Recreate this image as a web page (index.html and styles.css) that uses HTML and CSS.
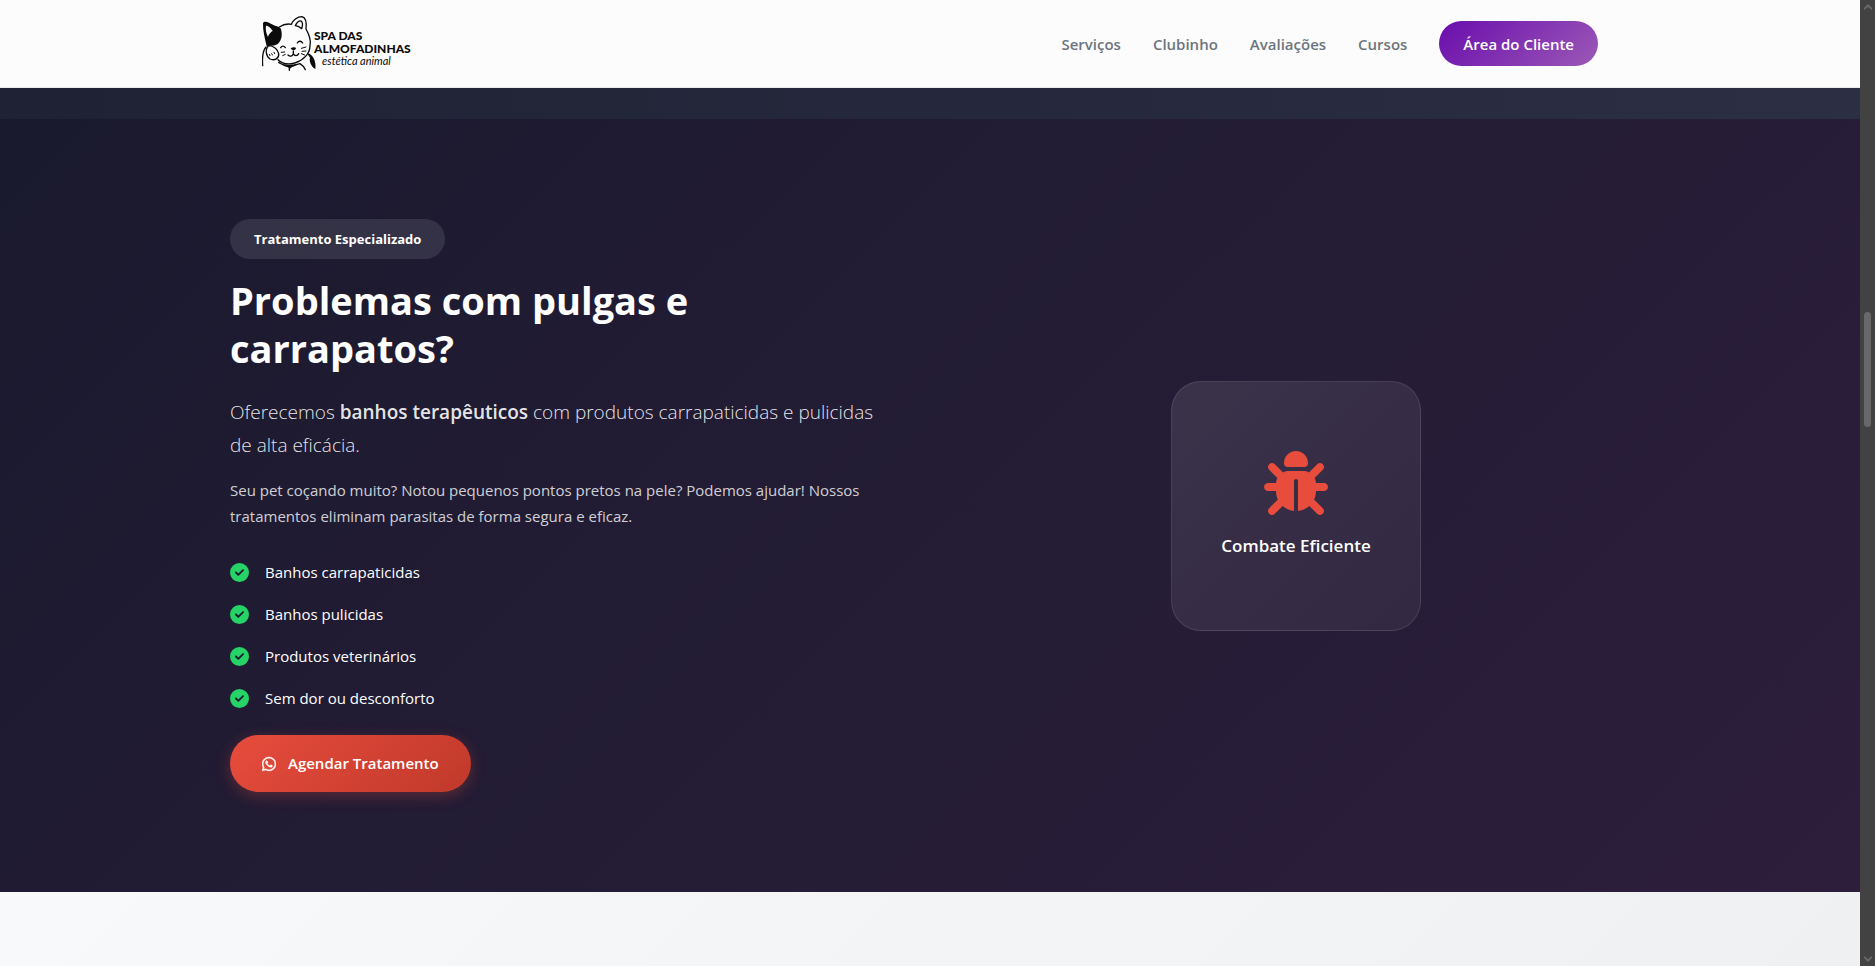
FILE: index.html
```html
<!DOCTYPE html>
<html lang="pt-BR">
<head>
  <meta charset="UTF-8" />
  <meta name="viewport" content="width=device-width, initial-scale=1.0"/>
  <title>Spa das Almofadinhas</title>
  <link rel="stylesheet" href="styles.css">
</head>
<body>
  <div class="page">
    <header class="header">
      <div class="container nav">
        <a class="logo" href="#">
          <svg class="logo-cat" viewBox="36 30 171 171" aria-hidden="true">
            <g fill="none" stroke="#0b0b0b" stroke-width="4" stroke-linecap="round" stroke-linejoin="round">
              <path d="M88 66C100 58 114 56 124 58C128 46 142 35 156 35C168 38 170 54 168 72C178 90 184 106 180 122C180 146 160 166 134 174C112 180 94 174 84 164"/>
              <path d="M136 62C140 54 147 47 153 48C159 52 158 62 155 71C150 66 144 63 136 62Z"/>
              <path d="M38 182C36 158 38 138 48 126"/>
              <path d="M56 122C44 132 48 154 60 162C74 168 88 160 86 146C84 134 72 122 56 122Z"/>
              <path d="M58 148L60 152M65 146L67 150M72 142L74 146" stroke-width="3"/>
              <path d="M92 128C96 122 102 122 106 128M142 114C146 106 154 108 158 114"/>
              <path d="M130 138V146C128 154 120 156 114 150M130 146C134 154 142 154 146 146"/>
              <path d="M94 142L104 141M98 152L106 148M154 130L168 126M156 139L168 138M154 146L164 150" stroke-width="3"/>
              <path d="M86 172C96 178 102 184 118 186C126 184 136 180 150 176C160 182 162 186 166 194M118 186V196"/>
            </g>
            <path fill="#0b0b0b" d="M39 54C44 46 56 52 66 58C76 64 86 64 92 70C98 88 96 106 84 116C74 124 64 120 50 124C44 98 38 74 39 54Z"/>
            <path fill="#fbfbfb" d="M48 62C56 62 64 70 68 78C62 82 56 88 54 96C48 84 46 72 48 62Z"/>
            <path fill="#0b0b0b" d="M122 130C128 126 136 126 138 130C136 138 126 138 122 130ZM172 146C184 144 200 166 196 192C186 188 176 168 180 158ZM96 176C110 180 126 180 140 176C132 186 126 182 120 192C116 184 106 184 96 176Z"/>
          </svg>
          <span class="logo-text">
            <span class="logo-name">SPA DAS</span>
            <span class="logo-name">ALMOFADINHAS</span>
            <span class="logo-tag">estética animal</span>
          </span>
        </a>
        <nav class="menu">
          <a href="#">Serviços</a>
          <a href="#">Clubinho</a>
          <a href="#">Avaliações</a>
          <a href="#">Cursos</a>
          <a class="btn-client" href="#">Área do Cliente</a>
        </nav>
      </div>
    </header>

    <div class="previous"></div>

    <section class="treatment">
      <div class="container treatment-grid">
        <div class="content">
          <span class="badge">Tratamento Especializado</span>
          <h2>Problemas com pulgas e carrapatos?</h2>
          <p class="lead">Oferecemos <strong>banhos terapêuticos</strong> com produtos carrapaticidas e pulicidas de alta eficácia.</p>
          <p class="text">Seu pet coçando muito? Notou pequenos pontos pretos na pele? Podemos ajudar! Nossos tratamentos eliminam parasitas de forma segura e eficaz.</p>
          <ul class="features">
            <li><svg viewBox="0 0 512 512" aria-hidden="true"><use href="#check"/></svg>Banhos carrapaticidas</li>
            <li><svg viewBox="0 0 512 512" aria-hidden="true"><use href="#check"/></svg>Banhos pulicidas</li>
            <li><svg viewBox="0 0 512 512" aria-hidden="true"><use href="#check"/></svg>Produtos veterinários</li>
            <li><svg viewBox="0 0 512 512" aria-hidden="true"><use href="#check"/></svg>Sem dor ou desconforto</li>
          </ul>
          <a class="btn-book" href="#">
            <svg viewBox="0 0 448 512" aria-hidden="true"><path fill="currentColor" stroke="currentColor" stroke-width="12" d="M380.9 97.1C339 55.1 283.2 32 223.9 32c-122.4 0-222 99.6-222 222 0 39.1 10.2 77.3 29.6 111L0 480l117.7-30.9c32.4 17.7 68.9 27 106.1 27h.1c122.3 0 224.1-99.6 224.1-222 0-59.3-25.2-115-67.1-157zm-157 341.6c-33.2 0-65.7-8.9-94-25.7l-6.7-4-69.8 18.3L72 359.2l-4.4-7c-18.5-29.4-28.2-63.3-28.2-98.2 0-101.7 82.8-184.5 184.6-184.5 49.3 0 95.6 19.2 130.4 54.1 34.8 34.9 56.2 81.2 56.1 130.5 0 101.8-84.9 184.6-186.6 184.6zm101.2-138.2c-5.5-2.8-32.8-16.2-37.9-18-5.1-1.9-8.8-2.8-12.5 2.8-3.7 5.6-14.3 18-17.6 21.8-3.2 3.7-6.5 4.2-12 1.4-32.6-16.3-54-29.1-75.5-66-5.7-9.8 5.7-9.1 16.3-30.3 1.8-3.7.9-6.9-.5-9.7-1.4-2.8-12.5-30.1-17.1-41.2-4.5-10.8-9.1-9.3-12.5-9.5-3.2-.2-6.9-.2-10.6-.2-3.7 0-9.7 1.4-14.8 6.9-5.1 5.6-19.4 19-19.4 46.3 0 27.3 19.9 53.7 22.6 57.4 2.8 3.7 39.1 59.7 94.8 83.8 35.2 15.2 49 16.5 66.6 13.9 10.7-1.6 32.8-13.4 37.4-26.4 4.6-13 4.6-24.1 3.2-26.4-1.3-2.5-5-3.9-10.5-6.6z"/></svg>
            Agendar Tratamento
          </a>
        </div>
        <div class="visual">
          <div class="card">
            <svg viewBox="0 0 512 512" aria-hidden="true"><path fill="currentColor" d="M256 0c53 0 96 43 96 96v3.600c0 15.700-12.700 28.400-28.400 28.400H188.400c-15.700 0-28.400-12.700-28.400-28.400V96c0-53 43-96 96-96zM41.400 105.400c12.500-12.500 32.800-12.500 45.300 0l64 64c.7.7 1.300 1.400 1.900 2.100c14.200-7.300 30.400-11.400 47.500-11.400H312c17.100 0 33.200 4.100 47.500 11.400c.6-.7 1.200-1.400 1.900-2.100l64-64c12.500-12.500 32.800-12.500 45.300 0s12.500 32.800 0 45.300l-64 64c-.7.7-1.400 1.300-2.100 1.900c6.200 12 10.100 25.300 11.100 39.500H480c17.700 0 32 14.300 32 32s-14.300 32-32 32H416c0 24.600-5.500 47.800-15.400 68.600c2.200 1.300 4.200 2.900 6 4.800l64 64c12.500 12.500 12.500 32.800 0 45.300s-32.800 12.500-45.300 0l-63.100-63.100c-24.500 21.800-55.800 36.200-90.300 39.600V240c0-8.800-7.200-16-16-16s-16 7.200-16 16V479.200c-34.500-3.400-65.800-17.800-90.300-39.600L86.600 502.600c-12.500 12.500-32.800 12.500-45.300 0s-12.500-32.800 0-45.300l64-64c1.900-1.900 3.900-3.400 6-4.800C101.500 367.800 96 344.600 96 320H32c-17.700 0-32-14.300-32-32s14.300-32 32-32H96.300c1.100-14.100 5-27.500 11.100-39.500c-.7-.6-1.400-1.200-2.100-1.900l-64-64c-12.500-12.500-12.500-32.800 0-45.300z"/></svg>
            <span>Combate Eficiente</span>
          </div>
        </div>
      </div>
    </section>

    <section class="next"></section>
  </div>

  <!-- Scrollbar -->
  <div class="scrollbar" aria-hidden="true">
    <svg viewBox="0 0 8 6"><path d="M0 6V4L4 0L8 4V6L4 3Z" fill="#686868"/></svg>
    <div class="scrollbar-thumb"></div>
    <svg viewBox="0 0 8 6"><path d="M0 0V2L4 6L8 2V0L4 3Z" fill="#686868"/></svg>
  </div>

  <svg class="symbols" aria-hidden="true">
    <symbol id="check" viewBox="0 0 512 512">
      <path fill="currentColor" d="M256 512A256 256 0 1 0 256 0a256 256 0 1 0 0 512zM369 209L241 337c-9.400 9.400-24.600 9.400-33.900 0l-64-64c-9.400-9.400-9.400-24.600 0-33.900s24.600-9.400 33.900 0l47 47L335 175c9.400-9.400 24.600-9.400 33.900 0s9.400 24.600 0 33.900z"/>
    </symbol>
  </svg>
</body>
</html>
```
FILE: styles.css
```css
* {
  margin: 0;
  padding: 0;
  box-sizing: border-box;
}

body {
  display: flex;
  height: 100vh;
  overflow: hidden;
  font-family: 'Open Sans', 'Noto Sans', sans-serif;
  font-size: 15px;
  color: #fff;
}

a {
  text-decoration: none;
}

.page {
  flex: 1;
  display: flex;
  flex-direction: column;
}

.container {
  width: 100%;
  max-width: 1400px;
  margin: 0 auto;
}

.header {
  background: #fcfcfc;
  border-bottom: 1px solid #ebebeb;
}

.nav {
  display: flex;
  justify-content: space-between;
  align-items: center;
  height: 87px;
  padding: 0 32px;
}

.logo {
  display: flex;
  color: #0b0b0b;
}

.logo-cat {
  width: 57px;
  height: 57px;
}

.logo-text {
  display: flex;
  flex-direction: column;
  margin-left: -5px;
  padding-top: 14px;
  font-family: Lato, sans-serif;
}

.logo-name {
  font-size: 12px;
  line-height: 13px;
  font-weight: 900;
}

.logo-tag {
  padding-left: 8px;
  font-size: 11px;
  line-height: 12px;
  font-style: italic;
}

.menu {
  display: flex;
  align-items: center;
  gap: 32px;
}

.menu a {
  color: #6c757d;
  font-weight: 600;
}

.menu .btn-client {
  padding: 2px 24px 0;
  line-height: 43px;
  border-radius: 25px;
  background: linear-gradient(135deg, #6a0dad, #9b59b6);
  color: #fff;
}

.previous {
  height: 31px;
  background: linear-gradient(90deg, #1e2234, #2c2e43);
}

.treatment {
  padding: 100px 0;
  background: linear-gradient(135deg, #1a1a2e, #2d1e3c);
}

.treatment-grid {
  display: grid;
  grid-template-columns: 1fr 1fr;
  gap: 64px;
  align-items: center;
}

.badge {
  display: inline-block;
  margin-bottom: 17px;
  padding: 0 24px;
  line-height: 40px;
  border-radius: 20px;
  background: rgba(255, 255, 255, 0.1);
  font-size: 13px;
  font-weight: 700;
}

h2 {
  margin-bottom: 24px;
  font-size: 38px;
  line-height: 48px;
  font-weight: 700;
}

.lead {
  margin-bottom: 15px;
  font-size: 19px;
  line-height: 33px;
  font-weight: 300;
  color: rgba(255, 255, 255, 0.9);
}

.lead strong {
  font-weight: 600;
}

.text {
  margin-bottom: 30px;
  line-height: 26px;
  color: rgba(255, 255, 255, 0.8);
}

.features {
  display: grid;
  gap: 16px;
  margin-bottom: 24px;
  list-style: none;
}

.features li {
  display: flex;
  align-items: center;
  gap: 16px;
  line-height: 26px;
}

.features svg {
  width: 19px;
  height: 19px;
  color: #25d366;
}

.btn-book {
  display: inline-flex;
  align-items: center;
  gap: 12px;
  padding: 0 32px;
  line-height: 57px;
  border-radius: 30px;
  background: linear-gradient(135deg, #e74c3c, #c0392b);
  box-shadow: 0 4px 15px rgba(231, 76, 60, 0.3);
  color: #fff;
  font-weight: 600;
}

.btn-book svg {
  width: 14px;
  height: 16px;
}

.visual {
  display: flex;
  justify-content: center;
}

.card {
  display: flex;
  flex-direction: column;
  align-items: center;
  justify-content: center;
  gap: 16px;
  width: 250px;
  height: 250px;
  border: 1px solid rgba(255, 255, 255, 0.1);
  border-radius: 30px;
  background: linear-gradient(135deg, rgba(255, 255, 255, 0.1), rgba(255, 255, 255, 0.05));
  font-size: 17px;
  line-height: 30px;
  font-weight: 600;
}

.card svg {
  width: 64px;
  height: 64px;
  color: #e74c3c;
}

.next {
  flex: 1;
  background: linear-gradient(135deg, #f8f9fa, #eef0f2);
}

.scrollbar {
  display: flex;
  flex-direction: column;
  align-items: center;
  width: 15px;
  padding: 4px 0;
  background: #424242;
}

.scrollbar svg {
  width: 8px;
  height: 6px;
}

.scrollbar-thumb {
  width: 7px;
  height: 115px;
  margin: 302px 0 auto;
  border-radius: 4px;
  background: #686868;
}

.symbols {
  display: none;
}
```
